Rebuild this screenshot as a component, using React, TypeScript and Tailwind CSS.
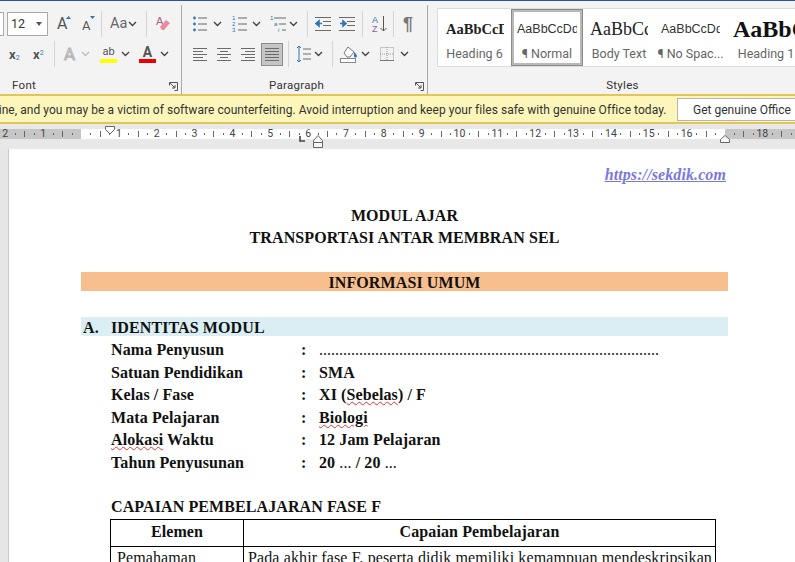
const Chevron = ({ className = '' }: { className?: string }) => (
  <svg width="9" height="6" viewBox="0 0 9 6" className={`shrink-0 ${className}`} fill="none" stroke="#444" strokeWidth="1.4">
    <path d="M1 1l3.5 3.5L8 1" />
  </svg>
);

const Sep = ({ className = '' }: { className?: string }) => <div className={`w-px h-[26px] bg-[#d4d4d4] shrink-0 ${className}`} />;

const Lines = ({ rows }: { rows: number[][] }) => (
  <svg width="16" height="18" viewBox="0 0 16 18" stroke="#6b6b6b" strokeWidth="1">
    {rows.map(([x1, x2], i) => (
      <line key={i} x1={x1} x2={x2} y1={3.5 + i * 3} y2={3.5 + i * 3} />
    ))}
  </svg>
);

const BulletList = () => (
  <svg width="15" height="18" viewBox="0 0 15 18">
    <g fill="#2e75b6">
      <circle cx="2.500" cy="3" r="1.400" />
      <circle cx="2.500" cy="9" r="1.400" />
      <circle cx="2.500" cy="15" r="1.400" />
    </g>
    <g stroke="#666">
      <line x1="6" x2="15" y1="3" y2="3" />
      <line x1="6" x2="15" y1="9" y2="9" />
      <line x1="6" x2="15" y1="15" y2="15" />
    </g>
  </svg>
);

const NumberList = () => (
  <svg width="15" height="18" viewBox="0 0 15 18">
    <g fill="#2e75b6" fontSize="6" fontFamily="Liberation Sans, sans-serif">
      <text x="0" y="5">1</text>
      <text x="0" y="11">2</text>
      <text x="0" y="17">3</text>
    </g>
    <g stroke="#666">
      <line x1="6" x2="15" y1="3" y2="3" />
      <line x1="6" x2="15" y1="9" y2="9" />
      <line x1="6" x2="15" y1="15" y2="15" />
    </g>
  </svg>
);

const MultiList = () => (
  <svg width="16" height="18" viewBox="0 0 16 18">
    <g fill="#2e75b6" fontSize="6" fontFamily="Liberation Sans, sans-serif">
      <text x="0" y="5">1</text>
      <text x="4" y="11">a</text>
      <text x="8" y="17">i</text>
    </g>
    <g stroke="#666">
      <line x1="4" x2="16" y1="3" y2="3" />
      <line x1="9" x2="16" y1="9" y2="9" />
      <line x1="12" x2="16" y1="15" y2="15" />
    </g>
  </svg>
);

const Indent = ({ flip }: { flip?: boolean }) => (
  <svg width="16" height="16" viewBox="0 0 16 16">
    <g stroke="#6b6b6b">
      <line x1="0" x2="16" y1="1.500" y2="1.500" />
      <line x1="8" x2="16" y1="5.500" y2="5.500" />
      <line x1="8" x2="16" y1="9.500" y2="9.500" />
      <line x1="0" x2="16" y1="14.500" y2="14.500" />
    </g>
    <path d={flip ? 'M1 7.500h3V5l3 2.500L4 10V7.500' : 'M7 7.500H4V5L1 7.500 4 10V7.500'} stroke="#2e75b6" strokeWidth="1.600" fill="#2e75b6" />
  </svg>
);

const Group = ({ width, label, labelClass, launcher, children }: { width: string; label: string; labelClass: string; launcher?: boolean; children: React.ReactNode }) => (
  <div className={`${width} relative flex flex-col border-r border-[#a9a9a9] shrink-0 h-[89px]`}>
    <div className="flex-1">{children}</div>
    <div className={`h-[16px] text-[11.500px] leading-[14px] text-[#333] tracking-[0.3px] ${labelClass}`}>{label}</div>
    {launcher && (
      <svg width="9" height="9" viewBox="0 0 9 9" className="absolute right-[3px] bottom-[3px]" fill="none" stroke="#555">
        <path d="M.5 3.500V.5h8v8h-3M1 1l5 5M3 6h3V3" />
      </svg>
    )}
  </div>
);

const FontGroup = () => (
  <Group width="w-[182px]" label="Font" labelClass="pl-[12px]" launcher>
    <div className="flex items-center h-[24px] mt-[7px]">
      <div className="w-[4px] h-[24px] border border-[#a9a9a9] border-l-0 bg-white shrink-0" />
      <div className="ml-[3px] w-[41px] h-[24px] border border-[#a9a9a9] bg-white flex items-center justify-between pl-[3px] pr-[5px] text-[12.500px] text-[#333] shrink-0">
        <span>12</span>
        <svg width="6" height="4" viewBox="0 0 6 4" fill="#555"><path d="M0 0h6L3 4z" /></svg>
      </div>
      <div className="ml-[9px] w-[16px] relative text-[16px] leading-none text-[#555] shrink-0">
        A
        <svg width="5" height="3" viewBox="0 0 5 3" className="absolute right-[2px] top-0" fill="#2e75b6"><path d="M0 3l2.500-3L5 3z" /></svg>
      </div>
      <div className="ml-[9px] w-[14px] relative text-[13px] leading-none text-[#555] pt-[2px] shrink-0">
        A
        <svg width="5" height="3" viewBox="0 0 5 3" className="absolute right-[1px] top-[-1px]" fill="#2e75b6"><path d="M0 0l2.500 3L5 0z" /></svg>
      </div>
      <Sep className="ml-[5px]" />
      <span className="ml-[8px] w-[16px] text-[14.500px] text-[#666] leading-none shrink-0">Aa</span>
      <Chevron className="ml-[2px]" />
      <Sep className="ml-[9px]" />
      <svg width="16" height="18" viewBox="0 0 16 18" className="ml-[8px] shrink-0">
        <text x="1" y="10" fontSize="11" fill="#a8647c" fontFamily="Liberation Sans, sans-serif">A</text>
        <path d="M5 12l6-7 4 3-6 7H7z" fill="#e98aa0" />
      </svg>
    </div>
    <div className="flex items-center h-[24px] mt-[6px]">
      <span className="ml-[9px] w-[14px] text-[13px] font-bold text-[#555] leading-none shrink-0">x<sub className="text-[7px] font-normal text-[#2e75b6]">2</sub></span>
      <span className="ml-[10px] w-[14px] text-[13px] font-bold text-[#555] leading-none shrink-0">x<sup className="text-[7px] font-normal text-[#2e75b6]">2</sup></span>
      <Sep className="ml-[7px]" />
      <span className="ml-[9px] w-[12px] text-[17px] leading-none text-[#e4e4e4] [-webkit-text-stroke:1px_#b4b4b4] shrink-0">A</span>
      <Chevron className="ml-[5px] opacity-30" />
      <div className="ml-[10px] w-[17px] flex flex-col items-center shrink-0">
        <span className="text-[11px] leading-[12px] text-[#555]">ab</span>
        <div className="mt-[1px] h-[4px] w-[17px] bg-[#ffff00]" />
      </div>
      <Chevron className="ml-[4px]" />
      <div className="ml-[9px] w-[17px] flex flex-col items-center shrink-0">
        <span className="text-[14px] font-bold leading-[12px] text-[#555]">A</span>
        <div className="mt-[1px] h-[4px] w-[17px] bg-[#ee0000]" />
      </div>
      <Chevron className="ml-[4px]" />
    </div>
  </Group>
);

const ParagraphGroup = () => (
  <Group width="w-[246px]" label="Paragraph" labelClass="pl-[87px]" launcher>
    <div className="flex items-center h-[24px] mt-[7px]">
      <div className="ml-[10px]"><BulletList /></div>
      <Chevron className="ml-[6px]" />
      <div className="ml-[10px]"><NumberList /></div>
      <Chevron className="ml-[5px]" />
      <div className="ml-[9px]"><MultiList /></div>
      <Chevron className="ml-[3px]" />
      <Sep className="ml-[9px]" />
      <div className="ml-[7px]"><Indent /></div>
      <div className="ml-[8px]"><Indent flip /></div>
      <Sep className="ml-[7px]" />
      <svg width="15" height="18" viewBox="0 0 15 18" className="ml-[9px] shrink-0">
        <text x="0" y="8" fontSize="9" fill="#2e75b6" fontFamily="Liberation Sans, sans-serif">A</text>
        <text x="0" y="17" fontSize="9" fill="#8e5ea2" fontFamily="Liberation Sans, sans-serif">Z</text>
        <path d="M11.500 1v15M8.500 13l3 3 3-3" stroke="#555" fill="none" />
      </svg>
      <Sep className="ml-[6px]" />
      <span className="ml-[9px] font-['Liberation_Sans',sans-serif] text-[18px] leading-none text-[#777] font-bold">¶</span>
    </div>
    <div className="flex items-center h-[24px] mt-[6px]">
      <div className="ml-[10px]"><Lines rows={[[1, 15], [1, 11], [1, 15], [1, 11], [1, 15]]} /></div>
      <div className="ml-[8px]"><Lines rows={[[1, 15], [4, 12], [1, 15], [4, 12], [1, 15]]} /></div>
      <div className="ml-[8px]"><Lines rows={[[1, 15], [5, 15], [1, 15], [5, 15], [1, 15]]} /></div>
      <div className="ml-[5px] w-[22px] h-[23px] bg-[#c5c5c5] border border-[#8a8a8a] flex items-center justify-center shrink-0">
        <Lines rows={[[1, 15], [1, 15], [1, 15], [1, 15], [1, 15]]} />
      </div>
      <Sep className="ml-[5px]" />
      <svg width="15" height="18" viewBox="0 0 15 18" className="ml-[7px] shrink-0">
        <path d="M3 1v16M1 3l2-2 2 2M1 15l2 2 2-2" stroke="#2e75b6" fill="none" />
        <g stroke="#6b6b6b"><line x1="7" x2="15" y1="4" y2="4" /><line x1="7" x2="15" y1="9" y2="9" /><line x1="7" x2="15" y1="14" y2="14" /></g>
      </svg>
      <Chevron className="ml-[3px]" />
      <Sep className="ml-[9px]" />
      <svg width="18" height="18" viewBox="0 0 18 18" className="ml-[7px] shrink-0">
        <path d="M4 8l4-6 6 5-4 5H7z" fill="#fff" stroke="#777" />
        <path d="M14 7c2 2 3 3 3 4a1.500 1.500 0 01-3 0z" fill="#2e75b6" />
        <rect x="0.500" y="13.500" width="15" height="4" fill="#fff" stroke="#888" />
      </svg>
      <Chevron className="ml-[3px]" />
      <svg width="14" height="14" viewBox="0 0 14 14" className="ml-[10px] shrink-0" fill="none">
        <rect x="0.500" y="0.500" width="13" height="13" stroke="#999" strokeDasharray="1 1" />
        <line x1="7" y1="0" x2="7" y2="14" stroke="#999" strokeDasharray="1 1" />
        <line x1="0" y1="7" x2="14" y2="7" stroke="#999" strokeDasharray="1 1" />
        <line x1="0" y1="13.500" x2="14" y2="13.500" stroke="#777" />
      </svg>
      <Chevron className="ml-[6px]" />
    </div>
  </Group>
);

const styles = [
  { w: 'w-[73px]', sampleClass: "font-['Liberation_Serif',serif] font-bold text-[14.500px] text-[#222] w-[63px] pl-[5px]", label: 'Heading 6' },
  { w: 'w-[72px]', sampleClass: "font-['Liberation_Sans',sans-serif] text-[12.500px] text-[#333] w-[63px] pl-[3px]", label: '¶ Normal', active: true },
  { w: 'w-[72px]', sampleClass: "font-['Liberation_Serif',serif] text-[18px] text-[#222] w-[62px] pl-[4px]", label: 'Body Text' },
  { w: 'w-[71px]', sampleClass: "font-['Liberation_Sans',sans-serif] text-[12.500px] text-[#333] w-[62px] pl-[3px]", label: '¶ No Spac...' },
  { w: 'w-[80px]', sampleClass: "font-['Liberation_Serif',serif] font-bold text-[24px] text-[#111] w-[66px] pl-[4px]", label: 'Heading 1' },
];

const StylesGroup = () => (
  <div className="flex-1 min-w-0 h-[89px] flex flex-col">
    <div className="ml-[9px] mt-[3px] h-[59px] bg-white border-y border-l border-[#dcdcdc] flex items-center overflow-hidden">
      {styles.map((s) => (
        <div
          key={s.label}
          className={`${s.w} h-[57px] shrink-0 flex flex-col items-center overflow-hidden ${s.active ? 'border-[3px] border-[#b8b8b8] outline outline-1 outline-[#8c8c8c] -outline-offset-1' : 'border-[3px] border-transparent'}`}
        >
          <div className="self-start h-[3px] shrink-0" />
          <div className={`self-start ${s.sampleClass} h-[28px] shrink-0 overflow-hidden whitespace-nowrap flex items-center leading-none`}>AaBbCcDd</div>
          <div className="mt-[1px] h-[19px] shrink-0 text-[12.500px] leading-[19px] text-[#666] whitespace-nowrap">{s.label}</div>
        </div>
      ))}
    </div>
    <div className="flex-1" />
    <div className="h-[16px] pl-[22px] text-center text-[11.500px] leading-[14px] text-[#333] tracking-[0.3px]">Styles</div>
  </div>
);

const PX_PER_CM = 37.85;
const ZERO = 81;

const Ruler = () => {
  const marks: React.ReactNode[] = [];
  for (let q = -8; q <= 76; q++) {
    const x = ZERO + (q * PX_PER_CM) / 4;
    if (q % 4 === 0) {
      const n = Math.abs(q / 4);
      if (n === 0 || n === 17) continue;
      marks.push(
        <span key={q} className="absolute top-[-1px] w-[14px] -ml-[7px] text-center text-[10.500px] leading-[12px] text-[#444]" style={{ left: x }}>
          {n}
        </span>
      );
    } else if (q % 2 === 0) {
      marks.push(<div key={q} className="absolute top-[2px] h-[6px] w-px bg-[#666]" style={{ left: x }} />);
    } else {
      marks.push(<div key={q} className="absolute top-[4px] h-[2px] w-px bg-[#666]" style={{ left: x }} />);
    }
  }
  return (
    <div className="h-[25px] bg-[#e8e8e8] pt-[5px]">
      <div className="relative h-[10px] bg-white overflow-visible">
        <div className="absolute left-0 top-0 h-[10px] w-[81px] bg-[#c6c6c6]" />
        <div className="absolute left-[725px] right-0 top-0 h-[10px] bg-[#c6c6c6]" />
        {marks}
        <svg width="10" height="9" viewBox="0 0 10 9" className="absolute left-[105px] top-[-3px]" fill="#fff" stroke="#666">
          <path d="M.5.500h9v3l-4.500 4.500L.5 3.500z" />
        </svg>
        <svg width="10" height="8" viewBox="0 0 10 8" className="absolute left-[720px] top-[6px]" fill="#fff" stroke="#666">
          <path d="M.5 7.500v-3L5 .5l4.500 4v3z" />
        </svg>
        <svg width="6" height="6" viewBox="0 0 6 6" className="absolute left-[299px] top-[7px]" fill="none" stroke="#444" strokeWidth="1.600">
          <path d="M1 0v5h5" />
        </svg>
        <svg width="10" height="13" viewBox="0 0 10 13" className="absolute left-[313px] top-[6px]" fill="#f5f5f5" stroke="#666">
          <path d="M.5 5.500L5 .5l4.500 5v2h-9zM.5 7.500h9v5h-9z" />
        </svg>
      </div>
    </div>
  );
};

function Typo({ children }: { children: React.ReactNode }) {
  return <span className="underline decoration-wavy decoration-[#d33] decoration-1 underline-offset-1">{children}</span>;
}

const info: { label: string; value: React.ReactNode; labelNode?: React.ReactNode }[] = [
  { label: 'Nama Penyusun', value: <span className="font-normal tracking-normal">.....................................................................................</span> },
  { label: 'Satuan Pendidikan', value: 'SMA' },
  { label: 'Kelas / Fase', value: <>XI (<Typo>Sebelas</Typo>) / F</> },
  { label: 'Mata Pelajaran', value: <Typo>Biologi</Typo> },
  { label: 'Alokasi Waktu', labelNode: <><Typo>Alokasi</Typo> Waktu</>, value: '12 Jam Pelajaran' },
  { label: 'Tahun Penyusunan', value: <>20 <span className="font-normal">...</span> / 20 <span className="font-normal">...</span></> },
];

export default function App() {
  return (
    <div className="w-[795px] h-[562px] overflow-hidden bg-[#e6e6e6] font-['Roboto','Liberation_Sans',sans-serif]">
      <div className="h-[1px] bg-[#2b579a]" />
      <div className="h-[4px] bg-[#f3f3f3]" />
      <div className="flex h-[89px] bg-[#f3f3f3]">
        <FontGroup />
        <ParagraphGroup />
        <StylesGroup />
      </div>

      <div className="h-[30px] bg-[#fdf6ba] border-y-2 border-[#e2c556] flex items-center whitespace-nowrap overflow-hidden">
        <span className="-ml-[8px] w-[685px] pt-[1px] text-[12px] tracking-[0.05px] text-[#333] shrink-0">uine, and you may be a victim of software counterfeiting. Avoid interruption and keep your files safe with genuine Office today.</span>
        <div className="shrink-0 w-[130px] h-[23px] bg-white border border-[#b5b5b5] text-[12px] leading-[22px] pl-[15px] text-[#333]">Get genuine Office</div>
      </div>

      <Ruler />

      <div className="ml-[8px] h-[413px] bg-white border-l border-[#c9c9c9] pl-[72px] pr-[67px] font-['Liberation_Serif',serif] font-bold text-[16px] leading-[22.500px] tracking-[0.1px] text-[#111]">
        <div className="pt-[15px] h-[43px] text-right pr-[2px] italic text-[#7b78dc] underline">https://sekdik.com</div>
        <div className="mt-[13px] text-center">MODUL AJAR</div>
        <div className="text-center -mt-[1px]">TRANSPORTASI ANTAR MEMBRAN SEL</div>
        <div className="mt-[23px] h-[19px] leading-[21px] bg-[#f8bf8e] text-center">INFORMASI UMUM</div>
        <div className="mt-[26px] h-[19px] leading-[21px] bg-[#daeef3] flex">
          <span className="w-[30px] pl-[2px]">A.</span>
          <span>IDENTITAS MODUL</span>
        </div>
        <div className="pl-[30px] pt-[3px]">
          {info.map((row) => (
            <div key={row.label} className="flex whitespace-nowrap">
              <span className="w-[190px]">{row.labelNode ?? row.label}</span>
              <span className="w-[18px]">:</span>
              <span>{row.value}</span>
            </div>
          ))}
        </div>
        <div className="pl-[30px] mt-[22px]">CAPAIAN PEMBELAJARAN FASE F</div>
        <table className="ml-[29px] w-[606px] border-collapse table-fixed">
          <tbody>
            <tr className="h-[27px] text-center">
              <td className="w-[133px] border border-black p-0">Elemen</td>
              <td className="border border-black p-0">Capaian Pembelajaran</td>
            </tr>
            <tr className="font-normal">
              <td className="border border-black px-[6px] py-0 align-top whitespace-nowrap">Pemahaman</td>
              <td className="border border-black px-[4px] py-0 align-top whitespace-nowrap overflow-hidden tracking-[0.12px]">Pada akhir fase F, peserta didik memiliki kemampuan mendeskripsikan</td>
            </tr>
          </tbody>
        </table>
      </div>
    </div>
  );
}
